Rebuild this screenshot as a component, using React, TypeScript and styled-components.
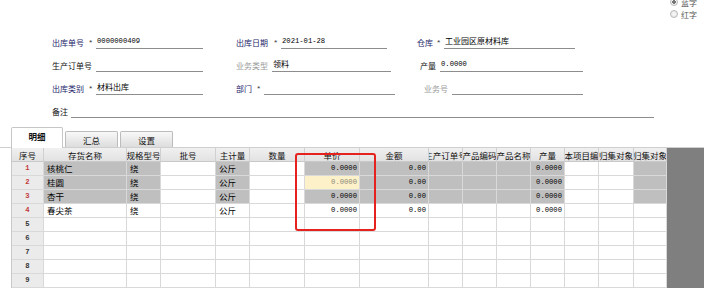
import * as React from "react";
import styled, { createGlobalStyle } from "styled-components";

const CJK = `"Noto Sans CJK SC", "DejaVu Sans", sans-serif`;
const MONO = `"Liberation Mono", "DejaVu Sans Mono", monospace`;

const GlobalStyle = createGlobalStyle`
  html, body { margin: 0; padding: 0; background: #fff; }
  body { font-family: ${CJK}; color: #111; }
`;

type Tone = "blue" | "gray" | "black";
type Fill = "gray" | "white" | "yellow" | "seq";

const toneColor: Record<Tone, string> = {
  blue: "#1d1d6a",
  gray: "#999999",
  black: "#111",
};

const fillColor: Record<Fill, string> = {
  gray: "#bfbfbf",
  white: "#ffffff",
  yellow: "#fdf1c9",
  seq: "#ebebeb",
};

// ---------- form data ----------

interface FieldDef {
  label: string;
  tone: Tone;
  star?: boolean;
  value?: string;
  mono?: boolean;
  labelW: number;
  lineW: number;
  indent?: number;
  span?: boolean;
}

const formRows: FieldDef[][] = [
  [
    { label: "出库单号", tone: "blue", star: true, value: "0000000409", mono: true, labelW: 44, lineW: 107 },
    { label: "出库日期", tone: "blue", star: true, value: "2021-01-28", mono: true, labelW: 45, lineW: 106 },
    { label: "仓库", tone: "blue", star: true, value: "工业园区原材料库", labelW: 27, lineW: 131 },
  ],
  [
    { label: "生产订单号", tone: "black", labelW: 44, lineW: 107 },
    { label: "业务类型", tone: "gray", value: "领料", labelW: 36, lineW: 119 },
    { label: "产量", tone: "black", value: "0.0000", mono: true, labelW: 20, lineW: 143, indent: 3 },
  ],
  [
    { label: "出库类别", tone: "blue", star: true, value: "材料出库", labelW: 44, lineW: 107 },
    { label: "部门", tone: "blue", star: true, labelW: 28, lineW: 131 },
    { label: "业务号", tone: "gray", labelW: 28, lineW: 131, indent: 7 },
  ],
  [{ label: "备注", tone: "black", labelW: 19, lineW: 583, span: true }],
];

// ---------- table data ----------

const columns: { title: string; w: number }[] = [
  { title: "序号", w: 32 },
  { title: "存货名称", w: 83 },
  { title: "规格型号", w: 34 },
  { title: "批号", w: 55 },
  { title: "主计量", w: 34 },
  { title: "数量", w: 55 },
  { title: "单价", w: 55 },
  { title: "金额", w: 69 },
  { title: "生产订单号", w: 34 },
  { title: "产品编码", w: 34 },
  { title: "产品名称", w: 34 },
  { title: "产量", w: 34 },
  { title: "成本项目编码", w: 34 },
  { title: "归集对象", w: 35 },
  { title: "归集对象", w: 33 },
];

// which columns are shaded (read-only) on a filled line
const shaded = [false, true, true, false, true, false, true, true, true, true, true, true, false, false, true];
const numCols = [6, 7, 11];

const items = [
  { name: "核桃仁", spec: "绕", unit: "公斤", lock: true },
  { name: "桂圆", spec: "绕", unit: "公斤", lock: true, editing: true },
  { name: "杏干", spec: "绕", unit: "公斤", lock: true },
  { name: "春尖茶", spec: "绕", unit: "公斤", lock: false },
];

const App: React.FC = () => {
  const rows = Array.from({ length: 9 }, (_, i) => items[i]);

  return (
    <Page>
      <GlobalStyle />
      <TopBar>
        <RadioGroup>
          <RadioItem>
            <RadioDot $on />
            <span>蓝字</span>
          </RadioItem>
          <RadioItem>
            <RadioDot />
            <span>红字</span>
          </RadioItem>
        </RadioGroup>
      </TopBar>

      <Form>
        {formRows.map((row, ri) =>
          row.map((f, fi) => (
            <Field key={`${ri}-${fi}`} $indent={f.indent ?? 0} $span={!!f.span}>
              <Label $w={f.labelW} $tone={f.tone}>
                <span>{f.label}</span>
                {f.star && <Star>*</Star>}
              </Label>
              <Line $w={f.lineW} $mono={!!f.mono}>
                {f.value}
              </Line>
            </Field>
          ))
        )}
      </Form>

      <TabStrip>
        <Tab $active>明细</Tab>
        <Tab>汇总</Tab>
        <Tab>设置</Tab>
      </TabStrip>

      <TableWrap>
        <Grid $cols={columns.map((c) => `${c.w}px`).join(" ")}>
          {columns.map((c, ci) => (
            <HeadCell key={`h${ci}`}>
              <span>{c.title}</span>
            </HeadCell>
          ))}
          {rows.map((it, ri) =>
            columns.map((_, ci) => {
              if (ci === 0) {
                return (
                  <Cell key={`${ri}-${ci}`} $fill="seq" $align="center" $mono>
                    <SeqNo $red={!!it}>{ri + 1}</SeqNo>
                  </Cell>
                );
              }
              let fill: Fill = "white";
              let text = "";
              if (it) {
                if (it.lock && shaded[ci]) fill = "gray";
                if (it.editing && ci === 6) fill = "yellow";
                if (ci === 1) text = it.name;
                if (ci === 2) text = it.spec;
                if (ci === 4) text = it.unit;
                if (ci === 6 || ci === 11) text = "0.0000";
                if (ci === 7) text = "0.00";
              }
              return (
                <Cell
                  key={`${ri}-${ci}`}
                  $fill={fill}
                  $align={numCols.includes(ci) ? "right" : "left"}
                  $mono={numCols.includes(ci)}
                  $dim={fill === "yellow"}
                >
                  {text}
                </Cell>
              );
            })
          )}
        </Grid>
        <Filler />
      </TableWrap>

      <Highlight />
    </Page>
  );
};

export default App;

// ---------- styles ----------

const Page = styled.div`
  position: relative;
  width: 704px;
  height: 288px;
  overflow: hidden;
  background: #fff;
  font-family: ${CJK};
`;

const TopBar = styled.div`
  height: 27px;
  display: flex;
  justify-content: flex-end;
  padding-right: 7px;
`;

const RadioGroup = styled.div`
  display: flex;
  flex-direction: column;
  margin-top: -4px;
`;

const RadioItem = styled.div`
  display: flex;
  align-items: center;
  gap: 3px;
  height: 12px;
  font-size: 8px;
  color: #555;
`;

const RadioDot = styled.span<{ $on?: boolean }>`
  box-sizing: border-box;
  width: 8px;
  height: 8px;
  border-radius: 50%;
  border: 1px solid #b9b9b9;
  background: ${(p) =>
    p.$on
      ? "radial-gradient(circle, #777 0 1.6px, #f4f4f4 2px)"
      : "radial-gradient(circle, #fafafa, #e2e2e2)"};
`;

const Form = styled.div`
  display: grid;
  grid-template-columns: 184px 181px 1fr;
  grid-auto-rows: 23px;
  align-items: end;
  padding-left: 52px;
`;

const Field = styled.div<{ $indent: number; $span: boolean }>`
  display: flex;
  align-items: flex-end;
  padding-left: ${(p) => p.$indent}px;
  grid-column: ${(p) => (p.$span ? "1 / -1" : "auto")};
  padding-bottom: 1px;
`;

const Label = styled.div<{ $w: number; $tone: Tone }>`
  flex: none;
  width: ${(p) => p.$w}px;
  display: flex;
  justify-content: space-between;
  align-items: center;
  font-size: 8px;
  line-height: 12px;
  height: 12px;
  white-space: nowrap;
  color: ${(p) => toneColor[p.$tone]};
  padding-right: 1px;
  box-sizing: border-box;
`;

const Star = styled.span`
  font-family: ${MONO};
  font-size: 8px;
  color: #333;
  padding-right: 2px;
`;

const Line = styled.div<{ $w: number; $mono: boolean }>`
  flex: none;
  box-sizing: border-box;
  width: ${(p) => p.$w}px;
  height: 13px;
  border-bottom: 1px solid #8d8d8d;
  font-family: ${(p) => (p.$mono ? MONO : CJK)};
  font-size: ${(p) => (p.$mono ? "7.2px" : "8px")};
  line-height: 10px;
  color: #000;
  padding-left: 1px;
  white-space: nowrap;
`;

const TabStrip = styled.div`
  margin-top: 8px;
  height: 20px;
  display: flex;
  align-items: flex-end;
  gap: 2px;
  padding-left: 11px;
  border-bottom: 1px solid #cfcfcf;
`;

const Tab = styled.div<{ $active?: boolean }>`
  box-sizing: border-box;
  width: ${(p) => (p.$active ? 52 : 53)}px;
  height: ${(p) => (p.$active ? 21 : 16)}px;
  margin-bottom: ${(p) => (p.$active ? -1 : 0)}px;
  border: 1px solid ${(p) => (p.$active ? "#c6c6c6" : "#bcbcbc")};
  border-bottom: none;
  border-radius: 2px 2px 0 0;
  background: ${(p) => (p.$active ? "#fff" : "linear-gradient(#f8f8f8, #dddddd)")};
  display: flex;
  justify-content: center;
  align-items: ${(p) => (p.$active ? "flex-start" : "center")};
  padding-top: ${(p) => (p.$active ? 2 : 0)}px;
  font-size: 8.5px;
  font-weight: ${(p) => (p.$active ? 700 : 400)};
  color: #111;
`;

const TableWrap = styled.div`
  display: flex;
  margin-left: 11px;
  height: 140px;
`;

const Grid = styled.div<{ $cols: string }>`
  display: grid;
  grid-template-columns: ${(p) => p.$cols};
  grid-auto-rows: 14px;
  border-left: 1px solid #c9c9c9;
  flex: none;
`;

const HeadCell = styled.div`
  box-sizing: border-box;
  display: flex;
  justify-content: center;
  align-items: center;
  overflow: hidden;
  white-space: nowrap;
  background: linear-gradient(#f0f0f0, #e2e2e2);
  border-right: 1px solid #d0d0d0;
  border-bottom: 1px solid #c9c9c9;
  font-size: 8.5px;
  color: #111;
  > span {
    flex: none;
  }
`;

const Cell = styled.div<{
  $fill: Fill;
  $align: "left" | "right" | "center";
  $mono?: boolean;
  $dim?: boolean;
}>`
  box-sizing: border-box;
  overflow: hidden;
  white-space: nowrap;
  background: ${(p) => fillColor[p.$fill]};
  border-right: 1px solid #d9d9d9;
  border-bottom: 1px solid #d9d9d9;
  text-align: ${(p) => p.$align};
  padding: 0 ${(p) => (p.$align === "right" ? 2 : 3)}px 0 3px;
  font-family: ${(p) => (p.$mono ? MONO : CJK)};
  font-size: ${(p) => (p.$mono ? "7.2px" : "8.5px")};
  line-height: 13px;
  color: ${(p) => (p.$dim ? "#8a8a7a" : "#000")};
`;

const SeqNo = styled.span<{ $red: boolean }>`
  color: ${(p) => (p.$red ? "#c23a3a" : "#333")};
  font-weight: 700;
`;

const Filler = styled.div`
  flex: 1;
  background: #7f7f7f;
`;

const Highlight = styled.div`
  position: absolute;
  left: 295px;
  top: 153px;
  width: 81px;
  height: 78px;
  box-sizing: border-box;
  border: 2.5px solid #e6221e;
  border-radius: 3px;
  pointer-events: none;
`;
